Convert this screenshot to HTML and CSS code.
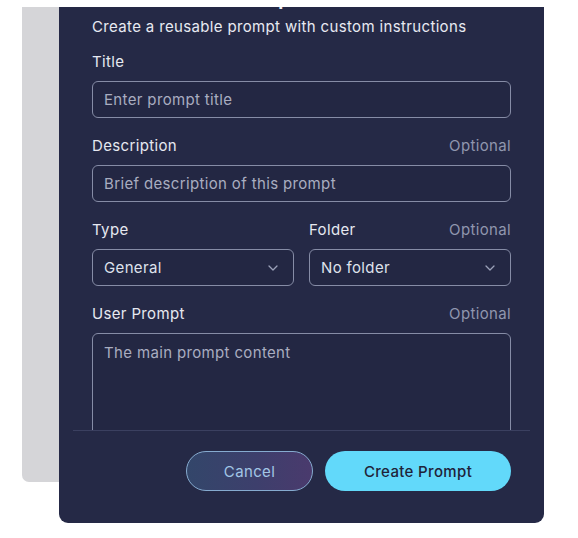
FILE: index.html
```html
<!DOCTYPE html>
<html lang="en">
<head>
<meta charset="utf-8">
<title>Create Prompt</title>
<link rel="stylesheet" href="styles.css">
</head>
<body>
<div class="stage">
  <div class="back-card"></div>
  <div class="modal">
    <div class="modal-body">
      <h2 class="modal-title">Create New Prompt</h2>
      <p class="subtitle">Create a reusable prompt with custom instructions</p>

      <div class="field">
        <div class="label-row"><span class="label">Title</span></div>
        <div class="input"><span class="placeholder">Enter prompt title</span></div>
      </div>

      <div class="field">
        <div class="label-row"><span class="label">Description</span><span class="optional">Optional</span></div>
        <div class="input"><span class="placeholder">Brief description of this prompt</span></div>
      </div>

      <div class="field-pair">
        <div class="field">
          <div class="label-row"><span class="label">Type</span></div>
          <div class="input select"><span class="value">General</span>
            <svg class="chev" width="10" height="6" viewBox="0 0 10 6"><path d="M1 1l4 4 4-4" fill="none" stroke="currentColor" stroke-width="1.3" stroke-linecap="round" stroke-linejoin="round"/></svg>
          </div>
        </div>
        <div class="field">
          <div class="label-row"><span class="label">Folder</span><span class="optional">Optional</span></div>
          <div class="input select"><span class="value">No folder</span>
            <svg class="chev" width="10" height="6" viewBox="0 0 10 6"><path d="M1 1l4 4 4-4" fill="none" stroke="currentColor" stroke-width="1.3" stroke-linecap="round" stroke-linejoin="round"/></svg>
          </div>
        </div>
      </div>

      <div class="field">
        <div class="label-row"><span class="label">User Prompt</span><span class="optional">Optional</span></div>
        <div class="input textarea"><span class="placeholder">The main prompt content</span></div>
      </div>
    </div>
    <div class="modal-footer">
      <button class="btn btn-cancel">Cancel</button>
      <button class="btn btn-create">Create Prompt</button>
    </div>
  </div>
</div>
</body>
</html>
```

FILE: styles.css
```css
* { box-sizing: border-box; }

html, body {
  margin: 0;
  padding: 0;
  background: #ffffff;
}

body {
  padding-top: 7px;
  font-family: "Inter", "Noto Sans", sans-serif;
  letter-spacing: 0.35px;
  width: 578px;
  height: 538px;
  overflow: hidden;
}

.stage {
  display: grid;
}

.back-card {
  grid-area: 1 / 1;
  margin-left: 22px;
  width: 420px;
  height: 475px;
  background: #d5d5d8;
  border-radius: 0 0 7px 7px;
}

.modal {
  grid-area: 1 / 1;
  margin-left: 59px;
  width: 485px;
  height: 516px;
  background: #252946;
  border-radius: 0 0 9px 9px;
  display: flex;
  flex-direction: column;
  overflow: hidden;
}

.modal-body {
  height: 424px;
  flex: none;
  margin: 0 14px;
  padding: 0 19px 0 19px;
  border-bottom: 1px solid #3b4060;
  overflow: hidden;
}

.modal-title {
  margin: -22px 0 6px 0;
  height: 26px;
  font-size: 21px;
  font-weight: 600;
  line-height: 26px;
  letter-spacing: 0.6px;
  color: #eef0f6;
}

.subtitle {
  margin: 0;
  height: 20px;
  line-height: 20px;
  font-size: 15px;
  color: #e8eaf2;
}

.field {
  margin-top: 14px;
}

.label-row {
  display: flex;
  justify-content: space-between;
  align-items: center;
  height: 20px;
  margin-bottom: 10px;
}

.label {
  font-size: 15px;
  color: #e6e8f0;
}

.optional {
  font-size: 15px;
  color: #9096ae;
}

.input {
  height: 37px;
  border: 1px solid #868ca6;
  border-radius: 6px;
  background: #232743;
  display: flex;
  align-items: center;
  padding: 0 11px;
}

.placeholder {
  font-size: 15px;
  color: #a9adc0;
}

.field + .field { margin-top: 17px; }

.field-pair {
  margin-top: 17px;
  display: grid;
  grid-template-columns: 1fr 1fr;
  column-gap: 15px;
}

.field-pair .field,
.field-pair .field + .field { margin-top: 0; }

.field-pair + .field { margin-top: 17px; }

.select {
  justify-content: space-between;
  padding-right: 15px;
}

.value {
  font-size: 15px;
  color: #dfe2ec;
}

.chev {
  color: #9ba1b9;
}

.textarea {
  height: 130px;
  align-items: flex-start;
  padding-top: 9px;
}

.modal-footer {
  flex: 1;
  display: flex;
  justify-content: flex-end;
  align-items: flex-start;
  gap: 12px;
  padding: 20px 33px 0 0;
}

.btn {
  height: 40px;
  border-radius: 20px;
  font-family: "Inter", "Noto Sans", sans-serif;
  font-size: 15px;
  letter-spacing: 0.35px;
  cursor: pointer;
}

.btn-cancel {
  width: 127px;
  border: 1px solid #86abd0;
  background: linear-gradient(90deg, #33466a 0%, #3d3f6c 55%, #4a3a6d 100%);
  color: #a2c6e6;
}

.btn-create {
  width: 186px;
  border: none;
  background: #62d9fa;
  color: #1f2339;
  font-weight: 500;
}
```
